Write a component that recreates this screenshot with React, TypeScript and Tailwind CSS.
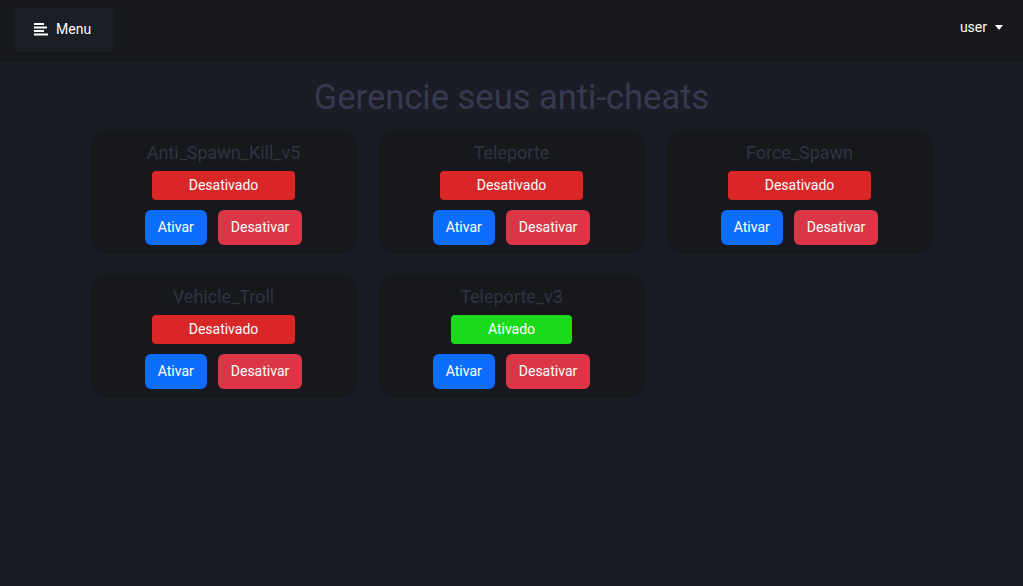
import React from 'react';

type Cheat = { name: string; active: boolean };

const cheats: Cheat[] = [
  { name: 'Anti_Spawn_Kill_v5', active: false },
  { name: 'Teleporte', active: false },
  { name: 'Force_Spawn', active: false },
  { name: 'Vehicle_Troll', active: false },
  { name: 'Teleporte_v3', active: true },
];

function MenuIcon() {
  return (
    <svg width="14" height="13" viewBox="0 0 14 13" fill="#ffffff">
      <rect x="0" y="0" width="10" height="2" />
      <rect x="0" y="3.5" width="13" height="2" />
      <rect x="0" y="7" width="10" height="2" />
      <rect x="0" y="10.5" width="14" height="2" />
    </svg>
  );
}

function CheatCard({ cheat }: { cheat: Cheat }) {
  return (
    <div className="bg-[#17181c] rounded-[16px] pt-[10px] pb-[9px] flex flex-col items-center">
      <h3 className="text-[18px] leading-[27px] text-[#2f3342]">{cheat.name}</h3>
      <div
        className={`mt-[5px] h-[29px] px-[37px] rounded-[4px] flex items-center text-[14px] text-white ${
          cheat.active ? 'bg-[#1bd91b]' : 'bg-[#d92626]'
        }`}
      >
        {cheat.active ? 'Ativado' : 'Desativado'}
      </div>
      <div className="mt-[10px] flex gap-[11px]">
        <button className="h-[35px] px-[13px] rounded-[6px] bg-[#0d6efd] text-white text-[14px]">Ativar</button>
        <button className="h-[35px] px-[13px] rounded-[6px] bg-[#dc3545] text-white text-[14px]">Desativar</button>
      </div>
    </div>
  );
}

export default function App() {
  return (
    <div className="min-h-[586px] bg-[#1b1d26] font-['Roboto',sans-serif]">
      <header className="h-[62px] bg-[#17181c] flex items-start justify-between pl-[14px] pr-[20px]">
        <button className="mt-[8px] h-[44px] w-[100px] bg-[#1c1e26] rounded-[3px] flex items-center pl-5 pb-[2px] gap-2 text-white text-[14px]">
          <MenuIcon />
          Menu
        </button>
        <div className="mt-[18px] flex items-center gap-2 text-white text-[14px] leading-[18px]">
          user
          <span className="w-0 h-0 border-l-[4px] border-r-[4px] border-t-[5px] border-l-transparent border-r-transparent border-t-white" />
        </div>
      </header>

      <main className="flex flex-col items-center">
        <h1 className="mt-[15px] text-[34.5px] leading-[40px] font-normal text-[#353a4f]">Gerencie seus anti-cheats</h1>
        <div className="mt-[12px] grid grid-cols-[266px_266px_266px] gap-x-[22px] gap-y-[19px]">
          {cheats.map((c) => (
            <CheatCard key={c.name} cheat={c} />
          ))}
        </div>
      </main>
    </div>
  );
}
